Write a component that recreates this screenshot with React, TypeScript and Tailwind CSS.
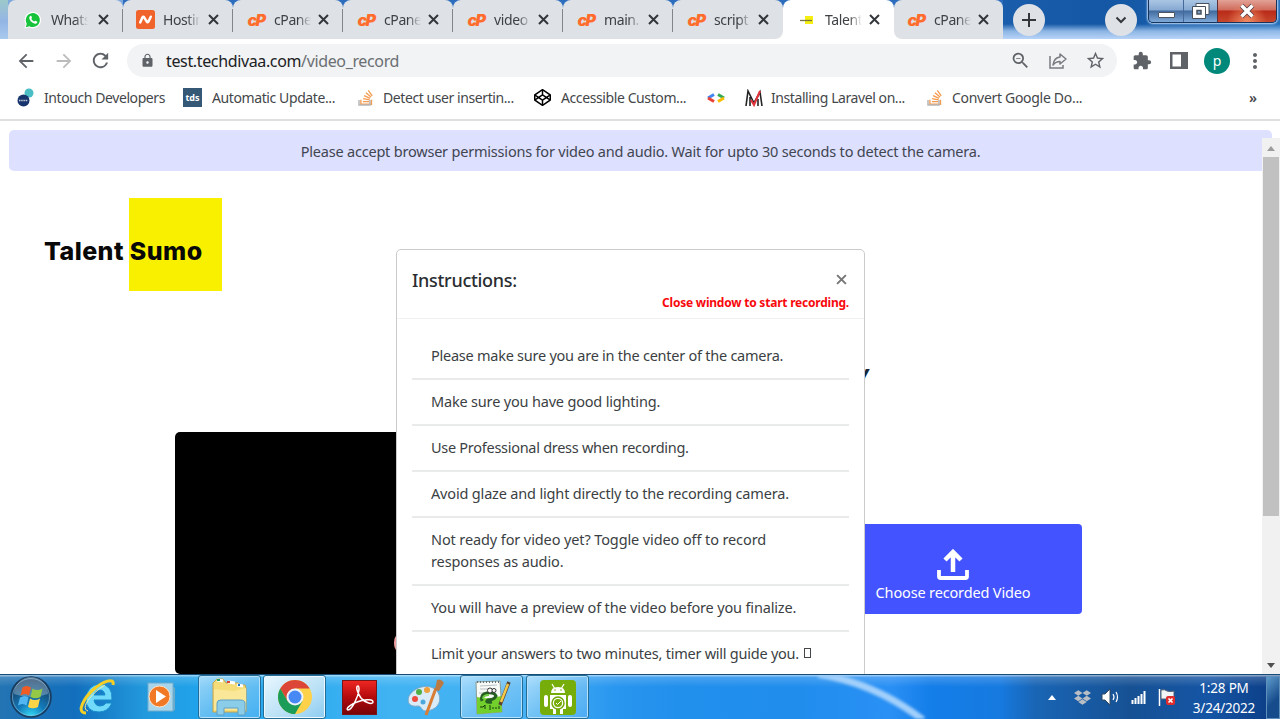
import React from "react";
import { FaStackOverflow, FaCodepen, FaDropbox } from "react-icons/fa";
import { MdLock, MdZoomOut, MdStarBorder, MdExtension, MdMoreVert, MdArrowBack, MdArrowForward, MdRefresh } from "react-icons/md";

const Svg = ({ w, h, vb, className = "", children }: { w: number; h: number; vb: string; className?: string; children: React.ReactNode }) => (
  <svg width={w} height={h} viewBox={vb} fill="none" className={`block shrink-0 ${className}`}>{children}</svg>
);

const Close = () => (
  <Svg w={11} h={11} vb="0 0 11 11"><path d="M1 1l9 9M10 1l-9 9" stroke="#33373b" strokeWidth="2" /></Svg>
);

const Cpanel = () => (
  <span className="w-5 text-center font-['Inter'] text-[16px] leading-none font-black tracking-[-1.5px] text-[#ff6c2c] italic">cP</span>
);

const WhatsApp = () => (
  <Svg w={18} h={18} vb="0 0 18 18">
    <path d="M0.5 17.5l1.2-4.4A8.2 8.2 0 1 1 5 16.3z" fill="#fff" />
    <path d="M1.8 16.2l1-3.5A7 7 0 1 1 5.400 15.200z" fill="#16c33b" />
    <path d="M6.200 5c.5-.5 1-.3 1.200.2l.6 1.400c.1.400-.5.9-.7 1.200.8 1.400 1.700 2.200 3.100 2.800.4-.3.7-1 1.100-.9l1.500.8c.5.2.3.9.1 1.300-.7 1.200-2.500 1-3.900.3C7.500 11.300 5.900 9.600 5.400 7.800c-.3-1.100 0-2 .8-2.800z" fill="#fff" />
  </Svg>
);

const Namecheap = () => (
  <Svg w={19} h={19} vb="0 0 19 19">
    <rect width="19" height="19" rx="2.500" fill="#f0642b" />
    <path d="M4.200 12.400L6.500 7.300q.7-1.300 1.600 0l2.700 4.400q.8 1.300 1.600 0l2.400-5" stroke="#fff" strokeWidth="2.500" strokeLinecap="round" strokeLinejoin="round" />
  </Svg>
);

const TalentIcon = () => (
  <Svg w={16} h={16} vb="0 0 16 16"><rect x="6" y="4" width="8" height="8" fill="#f5ee12" /><path d="M1 8.500h12" stroke="#77783c" strokeWidth="1.300" /></Svg>
);

const tabs = [
  { label: "Whats", icon: <WhatsApp />, w: "w-[115px] pl-[15px]" },
  { label: "Hostin", icon: <Namecheap />, w: "w-[110px] pl-[12px]" },
  { label: "cPane", icon: <Cpanel />, w: "w-[110px] pl-[13px]" },
  { label: "cPane", icon: <Cpanel />, w: "w-[110px] pl-[13px]" },
  { label: "video", icon: <Cpanel />, w: "w-[110px] pl-[13px]" },
  { label: "main.", icon: <Cpanel />, w: "w-[110px] pl-[13px]" },
  { label: "script", icon: <Cpanel />, w: "w-[110px] pl-[13px]" },
  { label: "Talent", icon: <TalentIcon />, w: "w-[111px] pl-[14px]", active: true },
  { label: "cPane", icon: <Cpanel />, w: "w-[109px] pl-[12px]" },
];

function TabStrip() {
  return (
    <div className="relative flex h-[39px] shrink-0 overflow-hidden bg-[linear-gradient(180deg,transparent_0_24px,#a9cbf3cc_31px,#b9d4f8_39px),linear-gradient(90deg,#9bbcdd_0%,#3674c1_20%,#2365b5_50%,#1c5fae_75%,#1457a4_87%,#246fba_100%)]">
      <div className="w-2 shrink-0 bg-[linear-gradient(180deg,#9dc8ca_0%,#93b5e5_55%,#a9c9ed_100%)]" />
      {tabs.map((t, i) => (
        <div key={i} className={`relative flex shrink-0 items-center ${t.w} ${i === 7 ? "z-10" : ""} bg-white`}>
          <div className={`absolute inset-0 [clip-path:inset(0_0_28px_0)] ${i === 0 ? "bg-[#7fa9dc]" : "bg-[#2c6dbd]"}`} />
          <div className={`absolute inset-0 rounded-t-lg ${t.active ? "bg-white" : i === 6 ? "rounded-br-lg bg-[#dee1e6]" : i === 8 ? "rounded-bl-lg bg-[#dee1e6]" : "bg-[#dee1e6]"}`} />
          <div className="relative flex w-5 shrink-0 justify-center">{t.icon}</div>
          <div className="relative ml-[8px] w-[37px] text-[14px] tracking-[-0.4px] whitespace-nowrap text-[#3f4245] [mask-image:linear-gradient(90deg,#000_65%,transparent)]">{t.label}</div>
          <div className="relative mr-[14px] ml-auto"><Close /></div>
          {i < 6 && <div className="absolute top-[9px] right-0 h-[23px] w-px bg-[#80868b]" />}
        </div>
      ))}
      <div className="mt-[4px] ml-[10px] flex size-8 items-center justify-center rounded-full bg-[#dee1e6]">
        <Svg w={14} h={14} vb="0 0 14 14"><path d="M7 0v14M0 7h14" stroke="#33373b" strokeWidth="2" /></Svg>
      </div>
      <div className="mt-[4px] ml-[60px] flex size-8 items-center justify-center rounded-full bg-[#dee1e6]">
        <Svg w={12} h={8} vb="0 0 12 8"><path d="M1.500 1.500L6 6l4.500-4.500" stroke="#33373b" strokeWidth="2" /></Svg>
      </div>
      <div className="ml-[11px] flex h-[23px] w-[129px] overflow-hidden rounded-b-[5px] border-x border-b border-[#17345e] shadow-[0_0_2px_1px_#c2dbf5]">
        <div className="flex w-[35px] items-end justify-center border-r border-[#456a99] bg-[linear-gradient(180deg,#abc6e4_0%,#86a9d2_45%,#416b9e_50%,#7ea9d8_100%)] pb-[4px]">
          <div className="h-[6px] w-[17px] rounded-[1px] border border-[#4b5461] bg-white" />
        </div>
        <div className="flex w-[34px] items-center justify-center border-r border-[#602f38] bg-[linear-gradient(180deg,#abc6e4_0%,#86a9d2_45%,#416b9e_50%,#7ea9d8_100%)]">
          <Svg w={20} h={18} vb="0 0 20 18">
            <path d="M5 1.500h13v11H5z" fill="#fff" stroke="#47515e" />
            <path d="M1.500 4.500h13v12h-13z" fill="#fff" stroke="#47515e" />
            <path d="M6 8.500h4v3.500H6z" fill="#87a9ce" stroke="#47515e" strokeWidth="1.500" />
          </Svg>
        </div>
        <div className="flex flex-1 items-center justify-center bg-[radial-gradient(circle_at_50%_100%,#f18a62_0%,transparent_55%),linear-gradient(180deg,#e2a297_0%,#cf6b5b_45%,#b92b18_50%,#c6462b_100%)]">
          <Svg w={18} h={16} vb="0 0 18 16">
            <path d="M3.500 2.500l11 11M14.500 2.500l-11 11" stroke="#533940" strokeWidth="5" />
            <path d="M3.500 2.500l11 11M14.500 2.500l-11 11" stroke="#fff" strokeWidth="3.500" />
          </Svg>
        </div>
      </div>
    </div>
  );
}

function Toolbar() {
  return (
    <div className="flex h-[43px] shrink-0 items-center bg-white pl-[15px] text-[#5f6368]">
      <MdArrowBack size={22} />
      <MdArrowForward size={22} className="ml-[16px] text-[#babcbe]" />
      <MdRefresh size={23} className="ml-[14px]" />
      <div className="ml-[15px] flex h-[33px] w-[990px] items-center rounded-full bg-[#f1f3f4] pl-[13px]">
        <MdLock size={15} />
        <div className="ml-[11px] text-[16px] tracking-[-0.36px] text-[#6b6f73]"><span className="text-[#202124]">test.techdivaa.com</span>/video_record</div>
        <MdZoomOut size={21} className="ml-auto" />
        <Svg w={20} h={18} vb="0 0 20 18" className="ml-[17px]">
          <path d="M2 4v12h13v-3" stroke="#777b80" strokeWidth="1.500" />
          <path d="M12 2l6 5-6 5V9.500C9 9.500 7 10.500 5 13c.5-4 3-7.500 7-8z" stroke="#777b80" strokeWidth="1.500" strokeLinejoin="round" />
        </Svg>
        <MdStarBorder size={21} className="mr-[11px] ml-[17px]" />
      </div>
      <MdExtension size={20} className="ml-[15px]" />
      <Svg w={18} h={17} vb="0 0 18 17" className="ml-[18px]"><path d="M1.250 1.250h15.500v14.500H1.250z" stroke="#5f6368" strokeWidth="2.500" /><path d="M11 1h6v15h-6z" fill="#5f6368" /></Svg>
      <div className="ml-[16px] flex size-[26px] items-center justify-center rounded-full bg-[#00897b] text-[14px] leading-none text-white">p</div>
      <MdMoreVert size={24} className="ml-[13px]" />
    </div>
  );
}

const Stack = () => (
  <div className="relative w-[16px]"><FaStackOverflow size={17} className="text-[#f49b4f]" /><Svg w={14} h={6} vb="0 0 14 6" className="absolute bottom-0 left-0"><path d="M1 0v5h11V0" stroke="#b5b7b9" strokeWidth="1.500" /></Svg></div>
);

function Bookmarks() {
  return (
    <div className="relative flex h-[39px] shrink-0 items-center border-b-2 border-[#dedfe1] bg-white pb-[6px] text-[14px] whitespace-nowrap text-[#44474a]">
      <div className="flex w-[183px] items-center pl-[17px]">
        <Svg w={17} h={19} vb="0 0 17 19"><circle cx="12" cy="5" r="4.500" fill="#4bbdc4" /><circle cx="6.500" cy="12.500" r="6" fill="#17346c" /><path d="M2 12.500h9" stroke="#c5cedc" strokeWidth="1.500" strokeDasharray="1.500 .7" /></Svg>
        <span className="ml-[10px] tracking-[-0.42px]">Intouch Developers</span>
      </div>
      <div className="flex w-[175px] items-center">
        <div className="flex size-[19px] items-center justify-center bg-[#355876] text-[9px] leading-none font-bold text-white">tds</div>
        <span className="ml-[10px] tracking-[-0.4px]">Automatic Update...</span>
      </div>
      <div className="flex w-[176px] items-center"><Stack /><span className="ml-[9px] tracking-[-0.42px]">Detect user insertin...</span></div>
      <div className="flex w-[173px] items-center"><FaCodepen size={17} className="text-black" /><span className="ml-[10px] tracking-[-0.4px]">Accessible Custom...</span></div>
      <div className="flex w-[38px] items-center">
        <Svg w={18} h={10} vb="0 0 18 10"><path d="M7 1.500L1 5" stroke="#4285f4" strokeWidth="3" /><path d="M1 5l6 3.500" stroke="#ea4335" strokeWidth="3" /><path d="M11 1.500L17 5" stroke="#34a853" strokeWidth="3" /><path d="M17 5l-6 3.500" stroke="#fbbc05" strokeWidth="3" /></Svg>
      </div>
      <div className="flex w-[182px] items-center">
        <Svg w={18} h={18} vb="0 0 18 18"><path d="M1 17L3 2l6 12 6-11 2 14M5 8v9M13 10v7" stroke="#242424" strokeWidth="1.600" /><path d="M6 11l3 5 6-14" stroke="#e6343d" strokeWidth="2" /></Svg>
        <span className="ml-[8px] tracking-[-0.42px]">Installing Laravel on...</span>
      </div>
      <div className="flex items-center"><Stack /><span className="ml-[9px] tracking-[-0.3px]">Convert Google Do...</span></div>
      <span className="mr-[23px] ml-auto text-[14px] leading-none font-semibold">»</span>
    </div>
  );
}

const steps = [
  { text: "Please make sure you are in the center of the camera.", t: "tracking-[-0.25px]" },
  { text: "Make sure you have good lighting.", t: "tracking-[-0.18px]" },
  { text: "Use Professional dress when recording.", t: "tracking-[-0.28px]" },
  { text: "Avoid glaze and light directly to the recording camera.", t: "tracking-[-0.17px]" },
  { text: "Not ready for video yet? Toggle video off to record responses as audio.", t: "tracking-[-0.11px]" },
  { text: "You will have a preview of the video before you finalize.", t: "tracking-[-0.16px]" },
];

function Instructions() {
  return (
    <div className="absolute top-[128px] left-[396px] z-20 h-[440px] w-[469px] rounded-t-[5px] border border-[#cbcbcb] bg-white text-[#3b3f43]">
      <div className="h-[69px] border-b border-[#eff1f2] px-[15px] pt-[17px]">
        <div className="flex h-[26px] items-center justify-between">
          <div className="text-[18px] font-medium tracking-[-0.3px] text-[#292d31]">Instructions:</div>
          <Svg w={11} h={11} vb="0 0 10 10" className="relative top-[-1px] mr-[2px]"><path d="M1 1l8 8M9 1l-8 8" stroke="#777" strokeWidth="1.800" /></Svg>
        </div>
        <div className="text-right text-[12px] leading-[19px] font-bold tracking-[-0.22px] text-[#f8090d]">Close window to start recording.</div>
      </div>
      <div className="px-[15px] pt-[15px] text-[14.500px] leading-[22.500px]">
        {steps.map((s) => (
          <div key={s.text} className={`border-b-2 border-[#e9eaea] px-[19px] pt-[10.200px] pb-[11.200px] ${s.t}`}>{s.text}</div>
        ))}
        <div className="flex items-center px-[19px] pt-[10.200px] tracking-[-0.24px]">Limit your answers to two minutes, timer will guide you.<span className="ml-[5px] h-[10px] w-[7px] border border-[#44474a]" /></div>
      </div>
    </div>
  );
}

function Page() {
  return (
    <div className="relative flex h-[553px] shrink-0 overflow-hidden bg-white">
      <div className="w-[1262px] shrink-0 pt-[9px] pl-[9px]">
        <div className="flex h-[41px] w-[1263px] items-center justify-center rounded-[5px] bg-[#dde0ff] pt-[2px] text-[14.500px] tracking-[-0.2px] text-[#414550]">Please accept browser permissions for video and audio. Wait for upto 30 seconds to detect the camera.</div>
        <div className="relative mt-[27px] ml-[120px] flex h-[93px] w-[93px] items-center bg-[#f9f000]">
          <div className="absolute top-[36px] left-[-85px] font-['Inter'] text-[25px] leading-[34px] font-extrabold tracking-[0.43px] whitespace-nowrap text-[#080808]">Talent Sumo</div>
        </div>
        <div className="flex pt-[71px] pr-[180px] pl-[166px]">
          <div className="mt-[70px] h-[242px] w-[470px] rounded-[5px] bg-black"><div className="mt-[197px] ml-[219px] size-[28px] rounded-full bg-[#ef9ca0]" /></div>
          <div className="ml-[40px] flex flex-1 flex-col items-end">
            <div className="h-[30px] w-[217px] text-[24px] leading-[22px] font-bold text-[#192638] italic"><span className="relative left-[-9px]">y</span></div>
            <div className="mt-[132px] flex h-[90px] w-[260px] flex-col items-center rounded-[4px] bg-[#4353ff] pt-[25px] pl-[2px] text-white">
              <Svg w={32} h={31} vb="0 0 32 31"><path d="M2 21v6.500q0 1.500 1.500 1.500h25q1.500 0 1.500-1.500V21" stroke="#fff" strokeWidth="3.800" /><path d="M16 23V3M8 11l8-8 8 8" stroke="#fff" strokeWidth="4.500" /></Svg>
              <span className="text-[14.500px] leading-[24px] tracking-[-0.15px]">Choose recorded Video</span>
            </div>
          </div>
        </div>
      </div>
      <div className="z-10 mt-[17px] flex flex-1 flex-col items-center bg-[#f1f1f1]">
        <Svg w={8} h={5} vb="0 0 8 5" className="mt-[8px]"><path d="M0 5l4-5 4 5z" fill="#9c9c9c" /></Svg>
        <div className="mt-[6px] h-[359px] w-[16px] bg-[#c1c1c1]" />
        <Svg w={8} h={5} vb="0 0 8 5" className="mt-auto mb-[6px]"><path d="M0 0l4 5 4-5z" fill="#505050" /></Svg>
      </div>
      <Instructions />
    </div>
  );
}

const Start = () => (
  <Svg w={42} h={42} vb="0 0 42 42">
    <defs><radialGradient id="orb" cx=".5" cy="1" r=".9"><stop stopColor="#36e1fa" /><stop offset=".4" stopColor="#137bba" /><stop offset="1" stopColor="#17375d" /></radialGradient></defs>
    <circle cx="21" cy="21" r="20" fill="url(#orb)" stroke="#193b5e" strokeWidth="1.500" />
    <circle cx="21" cy="21" r="18.500" stroke="#8bbbd8" opacity=".6" />
    <path d="M4 18a17 17 0 0 1 34 0q-17 6-34 0z" fill="#c6e3f2" opacity=".35" />
    <path d="M12.500 11.500q4-3 8.500 0l-2 8q-4-3-8.500 0z" fill="#f15c25" /><path d="M22.500 12.500q5 3 10 0l-2 8.500q-5 2.500-10 0z" fill="#94c846" />
    <path d="M10 21.500q5-3 8.500 0l-2 8q-4-3-8.500 0z" fill="#52b6f3" /><path d="M20 22.500q5 3 10 0l-2 8.500q-5 2.500-10 0z" fill="#ffd447" />
  </Svg>
);
const Ie = () => (
  <Svg w={40} h={38} vb="0 0 40 38">
    <path d="M34 22H16q1 6 6 6 4 0 6-3h6q-4 9-13 9Q8 34 8 21 9 7 22 6q13 1 12 16zM16 17h11q-1-5-5-5-5 0-6 5z" fill="#71dafa" stroke="#168bcb" strokeWidth="1" />
    <path d="M8 35C-3 35 7 19 15 12 25 3 37-1 35 7" stroke="#f4cf25" strokeWidth="3" />
    <path d="M10 33C1 30 15 14 27 7" stroke="#fff093" strokeWidth="1" />
  </Svg>
);
const Media = () => (
  <Svg w={30} h={32} vb="0 0 30 32"><path d="M24 4l4 3v22l-5 2z" fill="#6aabca" /><rect x="1" y="2" width="25" height="28" fill="#a7d5eb" stroke="#6faccb" /><circle cx="12.500" cy="15.500" r="10.500" fill="#f17824" stroke="#ffe2c8" /><path d="M9 9l10 6.500L9 22z" fill="#fff" /></Svg>
);
const Explorer = () => (
  <Svg w={40} h={38} vb="0 0 40 38"><path d="M3 34V5l4-4h6l3 4h12l2 2h5l1 3v24z" fill="#f4dc79" stroke="#c6a54c" /><path d="M7 2l6 1M18 4l7 1M27 7l6 1" stroke="#fff" strokeWidth="3" /><path d="M7 2h3" stroke="#24a362" strokeWidth="2" /><path d="M17 4h3" stroke="#df4439" strokeWidth="2" /><path d="M28 7h2" stroke="#2378c1" strokeWidth="2" /><path d="M4 11l20 2 12-3v22H4z" fill="#fae798" /><path d="M7 37V25q0-3 4-3h19q5 0 5 3v12h-7v-7H14v7z" fill="#8bcce9" stroke="#5d9fc6" /></Svg>
);
const Chrome = () => (
  <Svg w={36} h={36} vb="0 0 36 36"><circle cx="18" cy="18" r="17" fill="#fdd14a" /><path d="M3.300 9.500A17 17 0 0 1 32.700 9.500H18L10.600 22.200z" fill="#dc4637" /><path d="M3.300 9.500A17 17 0 0 0 18 35l7.400-12.700H10.600z" fill="#1b9c58" /><circle cx="18" cy="18" r="8.500" fill="#eef3fa" /><circle cx="18" cy="18" r="6.500" fill="#4688f4" /></Svg>
);
const Acrobat = () => (
  <Svg w={35} h={35} vb="0 0 35 35"><defs><linearGradient id="pdf" x2="0" y2="1"><stop stopColor="#ef2722" /><stop offset=".5" stopColor="#b30a0c" /><stop offset="1" stopColor="#760307" /></linearGradient></defs><rect x=".5" y=".5" width="34" height="34" fill="url(#pdf)" stroke="#771617" /><path d="M16 6c-3 0 0 8 3 12 4 5 12 7 12 4 0-4-11-2-16 0-6 2-12 7-9 8 4 0 10-13 11-20 0-3 0-4-1-4z" stroke="#fff" strokeWidth="1.500" /></Svg>
);
const Paint = () => (
  <Svg w={38} h={38} vb="0 0 38 38"><path d="M3 18C9 8 24 5 31 13c6 8 2 19-11 20-5 0-4-5-8-5-7 1-12-2-9-10z" fill="#d9ebf7" stroke="#7da9ca" /><circle cx="9" cy="21" r="3" fill="#ed4a40" /><circle cx="13" cy="14" r="3" fill="#50ae46" /><circle cx="21" cy="12" r="3" fill="#eda03b" /><circle cx="17" cy="24" r="2.500" fill="#4ca7de" /><path d="M20 37l10-27" stroke="#d97d35" strokeWidth="3" /><path d="M29 12l2-10q4-2 7 3l-5 8z" fill="#bb7944" /></Svg>
);
const Notepad = () => (
  <Svg w={38} h={38} vb="0 0 38 38"><path d="M3 4l24-1 2 31-25 2z" fill="#f8faf7" stroke="#8a9c91" /><path d="M4 19q12 3 24-1l1 16-25 2z" fill="#73cf2b" /><path d="M7 8l17-1M7 11h9M6 15h4" stroke="#b7c2c5" /><path d="M4 4h23" stroke="#64707a" strokeWidth="2" strokeDasharray="1 2" /><path d="M9 23q-2-7 5-8 7-1 9 3-2 4-8 4-4 3 4 2" stroke="#255f22" strokeWidth="3" /><path d="M10 21q0-4 6-4" stroke="#72ce43" strokeWidth="2" /><circle cx="17" cy="12.500" r="2.500" fill="#fff" stroke="#333" /><circle cx="21" cy="12.500" r="2" fill="#fff" stroke="#333" /><path d="M7 29h3l2-2v4M17 27v5M20 31v-2m3 2v-2m3 2v-3" stroke="#173c10" /><path d="M27 27l9-23" stroke="#554334" strokeWidth="3.500" /><path d="M28 24l7-18" stroke="#f4c849" strokeWidth="2.500" /></Svg>
);
const Android = () => (
  <Svg w={36} h={35} vb="0 0 36 35"><rect width="36" height="35" rx="4" fill="#76ad0a" /><path d="M11 13q0-6 7-6t7 6zM4 17q0-2 2-2t2 2v8q0 2-2 2t-2-2zM28 17q0-2 2-2t2 2v8q0 2-2 2t-2-2zM10 15h16v14h-3v5h-3v-5h-4v5h-3v-5h-3z" fill="#fff" /><path d="M12 4l3 5M24 4l-3 5" stroke="#fff" strokeWidth="1.200" /><circle cx="18" cy="23" r="6" fill="#fff" stroke="#71a80a" strokeWidth="1.500" /><circle cx="18" cy="23" r="4" fill="#76ad0a" /><path d="M16 23l1.500 1.500L21 21" stroke="#fff" /><circle cx="15" cy="10" r=".8" fill="#76ad0a" /><circle cx="21" cy="10" r=".8" fill="#76ad0a" /></Svg>
);

const apps = [
  { icon: <Ie />, c: "w-[66px]" },
  { icon: <Media />, c: "w-[67px] pr-[6px]" },
  { icon: <Explorer />, c: "w-[63px]", open: true },
  { icon: <Chrome />, c: "ml-[2px] w-[63px]", bright: true },
  { icon: <Acrobat />, c: "w-[67px]" },
  { icon: <Paint />, c: "w-[66px] pr-[2px]" },
  { icon: <Notepad />, c: "ml-[1px] w-[63px]", open: true },
  { icon: <Android />, c: "ml-[3px] w-[63px]", open: true },
];

function Taskbar() {
  return (
    <div className="relative flex h-[45px] shrink-0 items-center overflow-hidden border-t border-[#174c76] bg-[linear-gradient(180deg,#ffffff80_0_1px,#ffffff2e_2px,transparent_12px),linear-gradient(90deg,#2374b3_0px,#126fbd_75px,#2299dd_145px,#20a5ee_210px,#40b3f2_390px,#46b1f5_530px,#2895ef_620px,#218fec_680px,#208ded_800px,#2a90f5_890px,#147ee9_930px,#167ae0_1000px,#1965b5_1035px,#165194_1130px,#1555a5_1210px,#0b3b82_1280px)]">
      <Svg w={130} h={44} vb="0 0 130 44" className="absolute top-0 left-[810px] blur-[1.5px]"><path d="M8 -1Q65 8 113 45" stroke="#a2d0fb" strokeWidth="7" /></Svg>
      <div className="flex w-[65px] shrink-0 justify-center pr-[3px]"><Start /></div>
      {apps.map((a, i) => (
        <div key={i} className={`flex h-[44px] shrink-0 items-center justify-center ${a.c} ${a.bright ? "rounded-[3px] border border-[#236d97] bg-[linear-gradient(145deg,#e9f7ff,#bde2f6_55%,#8cccf1)] shadow-[inset_0_0_0_1px_#edf9ff]" : a.open ? "rounded-[3px] border border-[#236d97] bg-[linear-gradient(145deg,#d5efffaa,#91cff599_50%,#70bcf666)] shadow-[inset_0_0_0_1px_#b7e0fa]" : ""}`}>{a.icon}</div>
      ))}
      <div className="ml-auto flex h-full items-center">
        <Svg w={8} h={5} vb="0 0 8 5"><path d="M0 5l4-5 4 5z" fill="#fff" /></Svg>
        <FaDropbox size={17} className="ml-[18px] text-[#b9bec5]" />
        <Svg w={19} h={18} vb="0 0 19 18" className="ml-[10px]"><path d="M1 6h3l5-5v16l-5-5H1z" fill="#fff" stroke="#34495e" /><path d="M12 6q2 3 0 6M15 4q3 5 0 10" stroke="#fff" strokeWidth="1.200" /></Svg>
        <Svg w={15} h={13} vb="0 0 15 13" className="ml-[11px]"><path d="M1.500 13V9M4.500 13V7M7.500 13V5M10.500 13V3M13.500 13V0" stroke="#fff" strokeWidth="2" /></Svg>
        <Svg w={18} h={18} vb="0 0 18 18" className="ml-[12px]"><path d="M1.500 1v17" stroke="#fff" strokeWidth="1.500" /><path d="M3 2q4-1 6 1 3 1 7 0v8H3z" fill="#f2f5f8" stroke="#52616f" /><rect x="8" y="8" width="9" height="9" rx="2" fill="#e12c2d" /><path d="M10.500 10.500l4 4m0-4l-4 4" stroke="#fff" strokeWidth="1.700" /></Svg>
        <div className="ml-[11px] w-[74px] pt-px text-center text-[13.500px] leading-[20px] tracking-[-0.2px] text-white"><div>1:28 PM</div><div className="whitespace-nowrap">3/24/2022</div></div>
        <div className="ml-[5px] h-[43px] w-[14px] border border-[#5f90bb] bg-[linear-gradient(135deg,#5e9ac9,#164c8c_60%)]" />
      </div>
    </div>
  );
}

export default function App() {
  return (
    <div className="flex h-[719px] w-[1280px] flex-col overflow-hidden bg-white font-['Noto_Sans','Open_Sans',sans-serif]">
      <TabStrip />
      <Toolbar />
      <Bookmarks />
      <Page />
      <Taskbar />
    </div>
  );
}
